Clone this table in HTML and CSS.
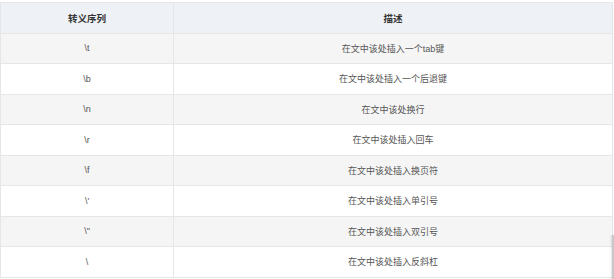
FILE: index.html
```html
<!DOCTYPE html>
<html lang="zh">
<head>
<meta charset="utf-8">
<link rel="stylesheet" href="styles.css">
</head>
<body>
<div class="wrap">
  <table class="esc">
    <thead>
      <tr><th class="c1">转义序列</th><th class="c2">描述</th></tr>
    </thead>
    <tbody>
      <tr class="odd"><td>\t</td><td>在文中该处插入一个tab键</td></tr>
      <tr><td>\b</td><td>在文中该处插入一个后退键</td></tr>
      <tr class="odd"><td>\n</td><td>在文中该处换行</td></tr>
      <tr><td>\r</td><td>在文中该处插入回车</td></tr>
      <tr class="odd"><td>\f</td><td>在文中该处插入换页符</td></tr>
      <tr><td>\'</td><td>在文中该处插入单引号</td></tr>
      <tr class="odd"><td>\"</td><td>在文中该处插入双引号</td></tr>
      <tr><td>\</td><td>在文中该处插入反斜杠</td></tr>
    </tbody>
  </table>
  <div class="scrollbar"></div>
</div>
</body>
</html>
```

FILE: styles.css
```css
html, body {
  margin: 0;
  padding: 0;
  background: #ffffff;
}
.wrap {
  padding-top: 2px;
  width: 614px;
  height: 277px;
  overflow: hidden;
}
.esc {
  border-collapse: collapse;
  width: 613px;
  table-layout: fixed;
  font-family: "Liberation Sans", "Noto Sans CJK SC", sans-serif;
  color: #555;
}
.esc th, .esc td {
  border: 1px solid #e6e6e6;
  text-align: center;
  vertical-align: middle;
  padding: 0;
  height: 29.5px;
}
.esc th {
  background: #eef1f5;
  color: #333;
  font-size: 9.5px;
  font-weight: bold;
}
.esc td {
  font-size: 9px;
  color: #555;
}
.esc .c1 {
  width: 172px;
}
.esc tr.odd td {
  background: #f5f5f5;
}
.scrollbar {
  position: absolute;
  left: 612px;
  top: 235px;
  width: 2px;
  height: 44px;
  background: #c8c8c8;
  box-shadow: -1px 0 2px rgba(0,0,0,0.12);
}
```
